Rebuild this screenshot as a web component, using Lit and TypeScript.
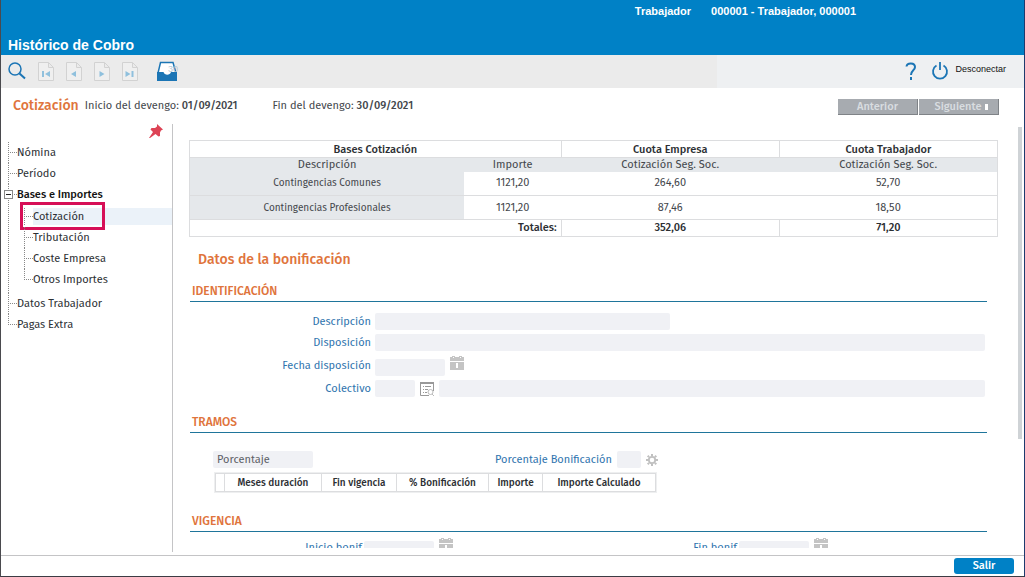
import { LitElement, html, css, svg } from "lit";
import { customElement } from "lit/decorators.js";

const calendar = html`<svg class="ico" width="14" height="14" viewBox="0 0 14 14" aria-hidden="true">
  <path fill="#c4c4c4" d="M0 1h2V0h3v1h4V0h3v1h2v4H0zM0 6h14v8H0z" />
  <path fill="#fff" d="M3 1h1v1H3zM10 1h1v1h-1zM6 7h2v5H6z" />
</svg>`;

const lookup = html`<svg class="ico" width="14" height="14" viewBox="0 0 14 14" aria-hidden="true">
  <path fill="none" stroke="#999" d="M13.5 9V.5H.5v13H9" />
  <path fill="#999" d="M0 0h14v2H0zM3 4h1v1H3zM5 4h6v1H5zM3 7h1v1H3zM5 7h3v1H5zM3 10h1v1H3zM5 10h2v1H5z" />
  <circle cx="10.500" cy="10" r="2.500" fill="#fff" stroke="#bbb" />
  <path stroke="#bbb" d="M12 12l2 2" />
</svg>`;

const gear = html`<svg class="ico" width="12" height="12" viewBox="0 0 12 12" aria-hidden="true">
  <circle cx="6" cy="6" r="3.2" fill="none" stroke="#c0c0c0" stroke-width="1.800" />
  <path stroke="#c0c0c0" stroke-width="2" d="M6 0v2M6 10v2M0 6h2M10 6h2M1.700 1.700l1.400 1.400M8.900 8.900l1.400 1.400M10.300 1.700L8.900 3.100M3.100 8.900l-1.400 1.400" />
</svg>`;

const arrows = {
  first: svg`<path d="M4 10h2v6H4zM12 10v6l-5-3z" />`,
  prev: svg`<path d="M10 10v6l-5-3z" />`,
  next: svg`<path d="M5.500 10v6l5-3z" />`,
  last: svg`<path d="M3.500 10v6l5-3zM9.500 10h2v6h-2z" />`,
};

const page = (label: string, arrow: unknown) => html`<button class="tool" disabled aria-label=${label}>
  <svg width="16" height="20" viewBox="0 0 16 20">
    <path fill="#efefef" stroke="#d2d2d2" d="M.5 1.500h10l5 5v13H.5zM10.500 1.500v5h5" />
    <g fill="#8fc0dd">${arrow}</g>
  </svg>
</button>`;

@customElement("app-root")
export class AppRoot extends LitElement {
  static styles = css`
    :host {
      display: flex;
      flex-direction: column;
      box-sizing: border-box;
      height: 100vh;
      min-height: 400px;
      border-bottom: 1px solid #3c3c44;
      border-left: 1px solid #4a4a4e;
      border-right: 1px solid #1d3a6e;
      background: #fff;
      color: #44474c;
      font: 11px/16px "Fira Sans", "Noto Sans", sans-serif;
    }
    * { box-sizing: border-box; }
    h1, h2, h3, ul { margin: 0; padding: 0; }
    ul { list-style: none; }
    svg { display: block; }
    button { font: inherit; border: 0; padding: 0; background: none; color: inherit; }
    a { color: inherit; text-decoration: none; }
    b { font-weight: 500; }
    .top {
      display: flex;
      flex-direction: column;
      justify-content: space-between;
      flex: none;
      height: 55px;
      padding: 3px 168px 2px 7px;
      background: #0081c6;
      color: #fff;
      font: bold 11px/16px "Liberation Sans", sans-serif;
    }
    .who { display: flex; justify-content: flex-end; gap: 20px; }
    .title { font-size: 14px; line-height: 16px; }
    .bar {
      display: flex;
      align-items: center;
      flex: none;
      height: 33px;
      padding: 0 18px 2px 7px;
      background: linear-gradient(90deg, #ebebeb 70%, #eef0f2 70%);
    }
    .tools { display: flex; align-items: center; gap: 12px; flex: 1; }
    .inbox { margin-left: 7px; }
    .inbox svg { overflow: visible; }
    .session { display: flex; align-items: center; gap: 14px; }
    .off { display: flex; align-items: flex-start; gap: 6px; color: #111; font: 9px/14px "Liberation Sans", sans-serif; }
    .head {
      display: flex;
      align-items: center;
      flex: none;
      height: 36px;
      padding: 0 25px 0 12px;
    }
    .head h2 { margin-right: 6px; font-size: 14px; font-weight: 500; color: #e0743c; }
    .head .end { flex: 1; margin-left: 35px; }
    .nav { display: flex; gap: 1px; margin-top: 2px; }
    .step {
      width: 80px;
      height: 16px;
      background: #a7abb0;
      border-right: 1px solid #7f8387;
      border-bottom: 1px solid #7f8387;
      color: #d9dde0;
      font-weight: 500;
      line-height: 14px;
    }
    .next { padding-left: 6px; }
    .mark { display: inline-block; width: 3px; height: 6px; margin-left: 4px; background: #fff; }
    .body { display: flex; flex: 1; min-height: 0; padding-bottom: 3px; border-bottom: 1px solid #c4c4c6; }
    .side {
      flex: none;
      width: 172px;
      border-right: 1px solid #c4c4c6;
      color: #2c2f33;
    }
    .pin { display: flex; justify-content: flex-end; height: 18px; padding-right: 9px; }
    .tree { padding-left: 7px; }
    .tree li { position: relative; }
    .tree li::before {
      content: "";
      position: absolute;
      left: 0;
      top: 0;
      height: 100%;
      border-left: 1px dotted #888;
    }
    .tree li:last-child::before { height: 11px; }
    .row { display: flex; align-items: center; height: 21px; }
    .row::before { content: ""; width: 9px; border-top: 1px dotted #888; }
    .tree .tree { padding: 1px 0 3px 16px; }
    .open > .row { font-weight: 500; color: #111; }
    .here { background: linear-gradient(90deg, transparent 9px, #ebf2f9 9px); height: 17px; margin: 2px 0; }
    .toggle {
      position: absolute;
      left: -4px;
      top: 6px;
      width: 9px;
      height: 9px;
      border: 1px solid #888;
      background: linear-gradient(#222, #222) center / 5px 1px no-repeat #fff;
    }
    .focus {
      position: absolute;
      left: -4px;
      top: -6px;
      width: 85px;
      height: 28px;
      border: 3px solid #d60f57;
      pointer-events: none;
    }
    .main { flex: 1; min-width: 0; overflow: hidden; margin-bottom: 4px; padding: 16px 20px 0 16px; }
    .scroll { flex: none; width: 4px; height: 312px; margin: 3px 2px 0 0; background: #cfd3d6; }
    table { border-collapse: collapse; text-align: center; }
    th { font-weight: 500; color: #2c2f33; padding: 0; }
    td { padding: 0; }
    .sums { width: 100%; table-layout: fixed; border: 1px solid #dcdddf; }
    .sums .edge th, .sums .edge td { height: 17px; border: 1px solid #dcdddf; line-height: 16px; }
    .sums .edge th { padding-top: 1px; line-height: 15px; }
    .sums .sub td { height: 14px; background: #e5e8eb; line-height: 13px; }
    .sums .val td { height: 24px; border-bottom: 1px solid #dcdddf; }
    .sums .val .name { background: #e5e8eb; font-size: 10px; }
    .sums .edge .total { text-align: right; padding-right: 4px; }
    .edge td { font-weight: 500; color: #2c2f33; }
    .c1 { width: 34%; } .c2 { width: 12%; } .c3 { width: 27%; }
    .data { margin: 14px 0 0 9px; font-size: 14px; line-height: 18px; color: #e0743c; font-weight: 500; }
    .sec {
      margin: 13px 11px 0 1px;
      padding: 0 0 1px 2px;
      border-bottom: 1px solid #1f759b;
      color: #e0743c;
      font-size: 12px;
      line-height: 18px;
      font-weight: 500;
    }
    .form { display: grid; gap: 4px; margin-top: 11px; padding: 0 13px 3px 0; }
    .field { display: grid; grid-template-columns: 182px 1fr; gap: 4px; align-items: center; min-height: 17px; }
    label { text-align: right; color: #2f74ae; white-space: nowrap; }
    .line { display: flex; align-items: center; gap: 5px; }
    input { height: 17px; min-width: 0; border: 0; border-radius: 2px; padding: 0 4px; background: #f0f1f5; color: #5d6066; font: inherit; }
    .wide { flex: 1; }
    .w295 { width: 295px; } .w100 { width: 100px; } .w70 { width: 70px; } .w40 { width: 40px; } .w24 { width: 24px; }
    .date { align-items: flex-start; padding-top: 1px; }
    .date input { margin-top: 3px; }
    .rate { display: flex; align-items: center; margin: 18px 0 0 24px; gap: 5px; }
    .rate .w100 { margin-right: 177px; }
    .grid { margin: 5px 0 20px 26px; border: 1px solid #d4d5d7; outline: 1px solid #eeeff0; }
    .grid th { height: 18px; border: 1px solid #dcdddf; font-size: 10px; }
    .two { display: grid; grid-template-columns: 375px 1fr; margin-top: 5px; padding-left: 1px; }
    .pair { display: grid; grid-template-columns: 172px auto; gap: 2px; align-items: center; justify-content: start; }
    .foot { display: flex; flex: none; justify-content: flex-end; height: 20px; padding: 2px 10px; }
    .exit { width: 60px; height: 16px; border-radius: 3px; background: #0081c6; color: #fff; line-height: 16px; font-weight: 500; }
  `;

  private leaf(text: string) {
    return html`<li><a class="row" href="#">${text}</a></li>`;
  }

  private sumRow(name: string, base: string, company: string, worker: string) {
    return html`<tr class="val"><td class="name">${name}</td><td>${base}</td><td>${company}</td><td>${worker}</td></tr>`;
  }

  render() {
    return html`
      <header class="top">
        <div class="who"><span>Trabajador</span><span>000001 - Trabajador, 000001</span></div>
        <h1 class="title">Histórico de Cobro</h1>
      </header>
      <div class="bar">
        <div class="tools">
          <button class="tool" aria-label="Buscar">
            <svg width="18" height="18" viewBox="0 0 18 18" fill="none" stroke="#1b75b5">
              <circle cx="7" cy="7" r="6" stroke-width="1.500" /><path stroke-width="2" d="M11.500 11.500l5.500 5" />
            </svg>
          </button>
          ${page("Primero", arrows.first)} ${page("Anterior", arrows.prev)} ${page("Siguiente", arrows.next)} ${page("Último", arrows.last)}
          <button class="tool inbox" aria-label="Bandeja">
            <svg width="21" height="20" viewBox="0 0 21 20">
              <path fill="#fff" stroke="#1b75b5" stroke-width="1.500" d="M3.500 1.500h12.500l3 10.500v7H1v-7z" />
              <path fill="#1b75b5" d="M0 11h6.500c1 3.500 6.500 3.500 7.500 0H20v9H0z" />
              <text x="11" y="11" font-size="9" font-family="Liberation Sans, sans-serif" fill="#b8c8d4">30</text>
            </svg>
          </button>
        </div>
        <div class="session">
          <button class="tool" aria-label="Ayuda">
            <svg width="12" height="18" viewBox="0 0 12 18">
              <path fill="none" stroke="#1b75b5" stroke-width="2" d="M1.500 4.500C2 .3 10 .3 10 5c0 3.500-4 3-4 8" /><path fill="#1b75b5" d="M5 15h2v3H5z" />
            </svg>
          </button>
          <button class="off">
            <svg width="18" height="18" viewBox="0 0 18 18" fill="none" stroke="#1b75b5" stroke-width="1.800">
              <path d="M5.500 3.500a7 7 0 1 0 7 0M9 0v8" />
            </svg>
            Desconectar
          </button>
        </div>
      </div>
      <div class="head">
        <h2>Cotización</h2>
        <span>Inicio del devengo: <b>01/09/2021</b></span>
        <span class="end">Fin del devengo: <b>30/09/2021</b></span>
        <div class="nav">
          <button class="step" disabled>Anterior</button>
          <button class="step next" disabled>Siguiente<span class="mark"></span></button>
        </div>
      </div>
      <div class="body">
        <nav class="side">
          <div class="pin">
            <svg width="14" height="14" viewBox="0 0 14 14" fill="#dd4355">
              <path d="M8 0l6 5.500-2 1-1 2 0 3.500-1.500.5L6.500 10 1 14H0l4-6L1.500 5.500 2.500 4 6 4l2-1.500z" />
            </svg>
          </div>
          <ul class="tree">
            ${this.leaf("Nómina")} ${this.leaf("Período")}
            <li class="open">
              <a class="row" href="#">Bases e Importes</a><span class="toggle"></span>
              <ul class="tree">
                <li><a class="row here" href="#">Cotización</a><span class="focus"></span></li>
                ${this.leaf("Tributación")} ${this.leaf("Coste Empresa")} ${this.leaf("Otros Importes")}
              </ul>
            </li>
            ${this.leaf("Datos Trabajador")} ${this.leaf("Pagas Extra")}
          </ul>
        </nav>
        <main class="main">
          <table class="sums">
            <colgroup><col class="c1" /><col class="c2" /><col class="c3" /><col class="c3" /></colgroup>
            <tbody>
              <tr class="edge"><th colspan="2">Bases Cotización</th><th>Cuota Empresa</th><th>Cuota Trabajador</th></tr>
              <tr class="sub"><td>Descripción</td><td>Importe</td><td>Cotización Seg. Soc.</td><td>Cotización Seg. Soc.</td></tr>
              ${this.sumRow("Contingencias Comunes", "1121,20", "264,60", "52,70")}
              ${this.sumRow("Contingencias Profesionales", "1121,20", "87,46", "18,50")}
              <tr class="edge"><td class="total" colspan="2">Totales:</td><td>352,06</td><td>71,20</td></tr>
            </tbody>
          </table>
          <h2 class="data">Datos de la bonificación</h2>
          <h3 class="sec">IDENTIFICACIÓN</h3>
          <div class="form">
            <div class="field"><label for="desc">Descripción</label><div class="line"><input id="desc" class="w295" readonly /></div></div>
            <div class="field"><label for="disp">Disposición</label><div class="line"><input id="disp" class="wide" readonly /></div></div>
            <div class="field"><label for="fecha">Fecha disposición</label><div class="line date"><input id="fecha" class="w70" readonly />${calendar}</div></div>
            <div class="field"><label for="col">Colectivo</label><div class="line"><input id="col" class="w40" readonly />${lookup}<input class="wide" aria-label="Nombre del colectivo" readonly /></div></div>
          </div>
          <h3 class="sec">TRAMOS</h3>
          <div class="rate">
            <input class="w100" aria-label="Tipo" value="Porcentaje" readonly />
            <label for="pct">Porcentaje Bonificación</label><input id="pct" class="w24" readonly />${gear}
          </div>
          <table class="grid">
            <colgroup><col width="9" /><col width="97" /><col width="75" /><col width="92" /><col width="54" /><col width="113" /></colgroup>
            <thead><tr><th></th><th>Meses duración</th><th>Fin vigencia</th><th>% Bonificación</th><th>Importe</th><th>Importe Calculado</th></tr></thead>
          </table>
          <h3 class="sec">VIGENCIA</h3>
          <div class="two">
            <div class="pair"><label for="ini">Inicio bonif</label><div class="line date"><input id="ini" class="w70" readonly />${calendar}</div></div>
            <div class="pair"><label for="fin">Fin bonif</label><div class="line date"><input id="fin" class="w70" readonly />${calendar}</div></div>
          </div>
        </main>
        <div class="scroll"></div>
      </div>
      <footer class="foot"><button class="exit">Salir</button></footer>
    `;
  }
}
